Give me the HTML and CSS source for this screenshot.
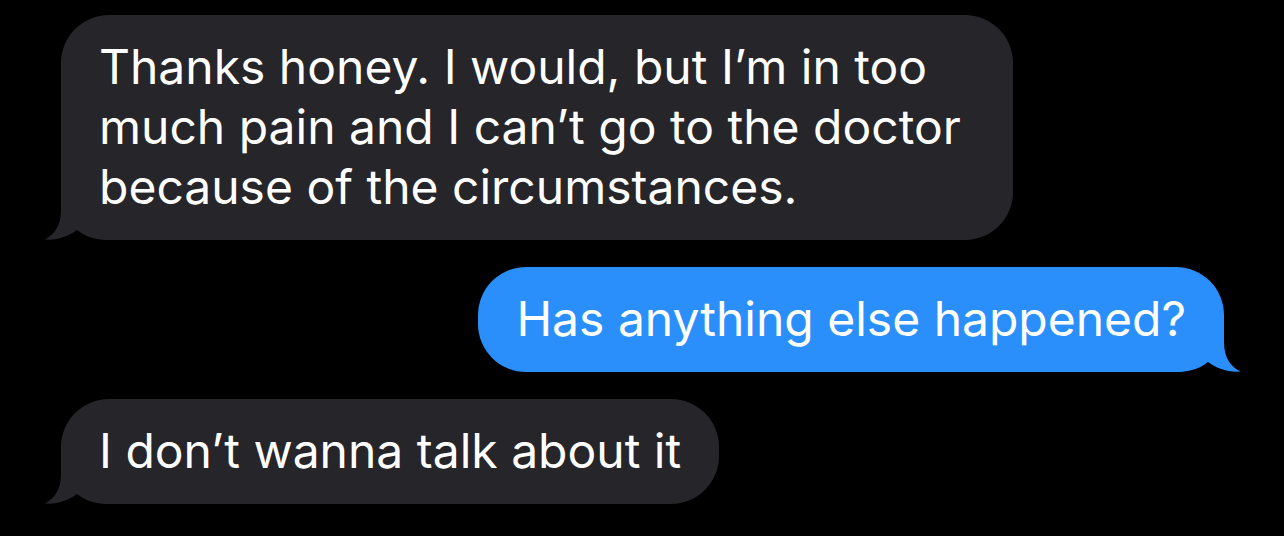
FILE: index.html
```html
<!DOCTYPE html>
<html>
<head>
<meta charset="utf-8">
<link rel="stylesheet" href="styles.css">
</head>
<body>
<div class="thread">
  <div class="row row-in">
    <div class="bubble bubble-in bubble-wide">
      <svg class="tail tail-in" width="70" height="50" viewBox="0 0 70 50"><path d="M20 0 L20 20 C20 37 12 46 3 49.5 C17 50.5 28 46 36 40 C46 48 57 50 70 50 L70 0 Z"/></svg>
      <span class="text">Thanks honey. I would, but I’m in too much pain and I can’t go to the doctor because of the circumstances.</span>
    </div>
  </div>
  <div class="row row-out">
    <div class="bubble bubble-out">
      <svg class="tail tail-out" width="70" height="50" viewBox="0 0 70 50"><path d="M50 0 L50 20 C50 37 58 46 67 49.5 C53 50.5 42 46 34 40 C24 48 13 50 0 50 L0 0 Z"/></svg>
      <span class="text">Has anything else happened?</span>
    </div>
  </div>
  <div class="row row-in">
    <div class="bubble bubble-in">
      <svg class="tail tail-in" width="70" height="50" viewBox="0 0 70 50"><path d="M20 0 L20 20 C20 37 12 46 3 49.5 C17 50.5 28 46 36 40 C46 48 57 50 70 50 L70 0 Z"/></svg>
      <span class="text">I don’t wanna talk about it</span>
    </div>
  </div>
</div>
</body>
</html>
```
FILE: styles.css
```css
html, body {
  margin: 0;
  padding: 0;
  background: #000;
}
.thread {
  display: flex;
  flex-direction: column;
  gap: 27px;
  padding: 15px 60px 0 61px;
  font-family: Inter, "Noto Sans", sans-serif;
  font-size: 48px;
  line-height: 60px;
  color: #fff;
}
.row {
  display: flex;
}
.row-out {
  justify-content: flex-end;
}
.bubble {
  position: relative;
  box-sizing: border-box;
  padding: 22px 38px 23px 38px;
  border-radius: 48px;
}
.bubble-wide {
  max-width: 952px;
}
.bubble-in {
  background: #262529;
}
.bubble-out {
  background: #2a8ffb;
}
.text {
  position: relative;
  z-index: 1;
}
.tail {
  position: absolute;
  bottom: 0;
  z-index: 0;
}
.tail-in {
  left: -20px;
  fill: #262529;
}
.tail-out {
  right: -20px;
  fill: #2a8ffb;
}
```
